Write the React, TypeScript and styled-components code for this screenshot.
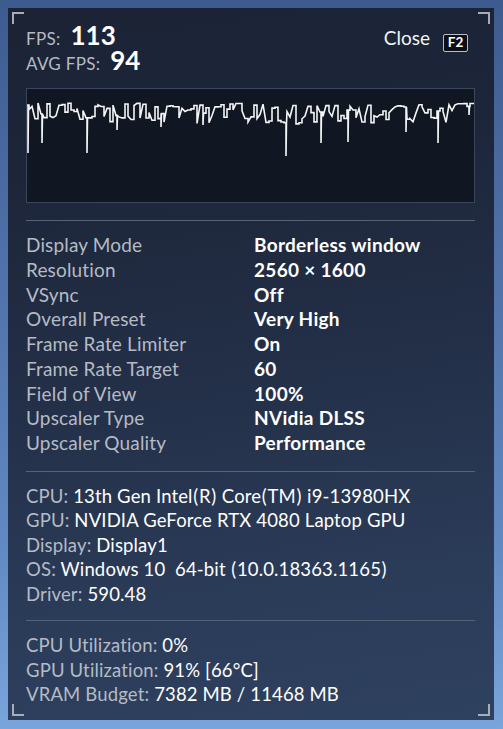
import styled, { createGlobalStyle } from "styled-components";

const GlobalStyle = createGlobalStyle`
  html, body {
    margin: 0;
    padding: 0;
  }
  body {
    min-height: 729px;
    background: linear-gradient(180deg, #3d5b8f 0%, #4f70a8 35%, #6189c2 75%, #7aa5dc 100%);
    font-family: Lato, "Noto Sans", sans-serif;
  }
`;

const Page = styled.div`
  padding: 8px 9px 9px 8px;
`;

const Panel = styled.section`
  position: relative;
  box-sizing: border-box;
  width: 486px;
  height: 712px;
  padding: 15px 19px 0 18px;
  background: linear-gradient(172deg, #1b2335 0%, #1d2639 22%, #24314a 55%, #2b3c59 80%, #2e415f 100%);
  color: #ffffff;
`;

const Corner = styled.span<{ $v: "top" | "bottom"; $h: "left" | "right" }>`
  position: absolute;
  width: 10px;
  height: 10px;
  ${(p) => p.$v}: 4px;
  ${(p) => p.$h}: 4px;
  border-${(p) => p.$v}: 2px solid #a7adb8;
  border-${(p) => p.$h}: 2px solid #a7adb8;
`;

const Header = styled.header`
  display: flex;
  flex-direction: column;
`;

const FpsRow = styled.div`
  display: flex;
  align-items: baseline;
  height: 25px;
  line-height: 25px;
`;

const FpsLabel = styled.span`
  font-size: 17px;
  letter-spacing: 0.3px;
  color: #b5bbc5;
  margin-right: 10px;
`;

const FpsValue = styled.span`
  font-size: 26px;
  font-weight: 700;
  color: #ffffff;
`;

const CloseButton = styled.div`
  margin-left: auto;
  display: flex;
  align-items: baseline;
  gap: 13px;
  font-size: 19px;
  color: #f2f3f5;
  padding-right: 7px;
`;

const KeyCap = styled.span`
  display: inline-flex;
  align-items: center;
  justify-content: center;
  box-sizing: border-box;
  width: 25px;
  height: 18px;
  border: 1.5px solid #b9bec6;
  border-radius: 2px;
  background: #0c0f15;
  font-size: 13.5px;
  line-height: 1;
  font-weight: 700;
  color: #ffffff;
  transform: translateY(2px);
`;

const Graph = styled.div`
  margin-top: 15px;
  box-sizing: border-box;
  height: 115px;
  border: 1px solid #3a4659;
  background: #111722;
  svg {
    display: block;
  }
`;

const Divider = styled.hr`
  margin: 0;
  border: none;
  height: 1px;
  background: #56627a;
`;

const Section = styled.div<{ $top: number; $bottom: number }>`
  padding: ${(p) => p.$top}px 0 ${(p) => p.$bottom}px;
`;

const SettingRow = styled.div`
  display: grid;
  grid-template-columns: 228px 1fr;
  height: 24.75px;
  line-height: 24.75px;
  font-size: 19px;
`;

const Label = styled.span`
  color: #b5bbc5;
  letter-spacing: 0.15px;
`;

const BoldValue = styled.span`
  color: #ffffff;
  font-weight: 700;
  letter-spacing: 0.3px;
`;

const InfoRow = styled.div`
  height: 24.5px;
  line-height: 24.5px;
  font-size: 18.5px;
  letter-spacing: 0.15px;
  white-space: pre;
`;

const Value = styled.span`
  color: #ffffff;
`;

const Paren = styled.span`
  padding: 0 0.6px;
`;

// the game font's parentheses sit a little wider than Lato's
function withParens(text: string) {
  return text.split(/([()])/).map((part, i) =>
    part === "(" || part === ")" ? <Paren key={i}>{part}</Paren> : part
  );
}

const settings: [string, string][] = [
  ["Display Mode", "Borderless window"],
  ["Resolution", "2560 × 1600"],
  ["VSync", "Off"],
  ["Overall Preset", "Very High"],
  ["Frame Rate Limiter", "On"],
  ["Frame Rate Target", "60"],
  ["Field of View", "100%"],
  ["Upscaler Type", "NVidia DLSS"],
  ["Upscaler Quality", "Performance"],
];

const system: [string, string][] = [
  ["CPU:", "13th Gen Intel(R) Core(TM) i9-13980HX"],
  ["GPU:", "NVIDIA GeForce RTX 4080 Laptop GPU"],
  ["Display:", "Display1"],
  ["OS:", "Windows 10  64-bit (10.0.18363.1165)"],
  ["Driver:", "590.48"],
];

const usage: [string, string][] = [
  ["CPU Utilization:", "0%"],
  ["GPU Utilization:", "91% [66°C]"],
  ["VRAM Budget:", "7382 MB / 11468 MB"],
];

// frame time trace, seeded so it looks the same every time
function makeWave(): string {
  let seed = 1234567;
  const rnd = () => {
    seed = (seed * 16807) % 2147483647;
    return seed / 2147483647;
  };
  const dips: [number, number][] = [
    [1, 64], [15, 54], [60, 64], [90, 41], [134, 38], [176, 36],
    [259, 67], [294, 54], [321, 53], [379, 43], [411, 54], [442, 26],
  ];
  const pts: string[] = ["0,16"];
  let y = 16;
  for (let x = 2; x <= 445; x += 3) {
    const dip = dips.find(([dx]) => dx >= x - 3 && dx < x);
    if (dip) {
      pts.push(`${dip[0]},${y}`, `${dip[0]},${dip[1]}`, `${dip[0] + 0.5},${y}`);
    }
    const prev = y;
    const r = rnd();
    if (r < 0.35) y = 14 + rnd() * 4;
    else if (r < 0.75) y = 18 + rnd() * 12;
    else y = 26 + rnd() * 9;
    if (rnd() < 0.5) pts.push(`${x},${prev}`);
    pts.push(`${x},${y}`);
  }
  pts.push(`447,${y}`);
  return pts.join(" ");
}

const wave = makeWave();

export default function App() {
  return (
    <>
      <GlobalStyle />
      <Page>
        <Panel>
          <Corner $v="top" $h="left" />
          <Corner $v="top" $h="right" />
          <Corner $v="bottom" $h="left" />
          <Corner $v="bottom" $h="right" />
          <Header>
            <FpsRow>
              <FpsLabel>FPS:</FpsLabel>
              <FpsValue>113</FpsValue>
              <CloseButton>
                Close <KeyCap>F2</KeyCap>
              </CloseButton>
            </FpsRow>
            <FpsRow>
              <FpsLabel>AVG FPS:</FpsLabel>
              <FpsValue>94</FpsValue>
            </FpsRow>
          </Header>
          <Graph>
            <svg width="447" height="113" viewBox="0 0 447 113">
              <polyline
                points={wave}
                fill="none"
                stroke="#f4f5f7"
                strokeWidth="1.6"
                strokeLinejoin="miter"
              />
            </svg>
          </Graph>
          <Section $top={17} $bottom={0} />
          <Divider />
          <Section $top={12} $bottom={15}>
            {settings.map(([k, v]) => (
              <SettingRow key={k}>
                <Label>{k}</Label>
                <BoldValue>{v}</BoldValue>
              </SettingRow>
            ))}
          </Section>
          <Divider />
          <Section $top={12} $bottom={14}>
            {system.map(([k, v]) => (
              <InfoRow key={k}>
                <Label>{k} </Label>
                <Value>{withParens(v)}</Value>
              </InfoRow>
            ))}
          </Section>
          <Divider />
          <Section $top={12} $bottom={0}>
            {usage.map(([k, v]) => (
              <InfoRow key={k}>
                <Label>{k} </Label>
                <Value>{v}</Value>
              </InfoRow>
            ))}
          </Section>
        </Panel>
      </Page>
    </>
  );
}
